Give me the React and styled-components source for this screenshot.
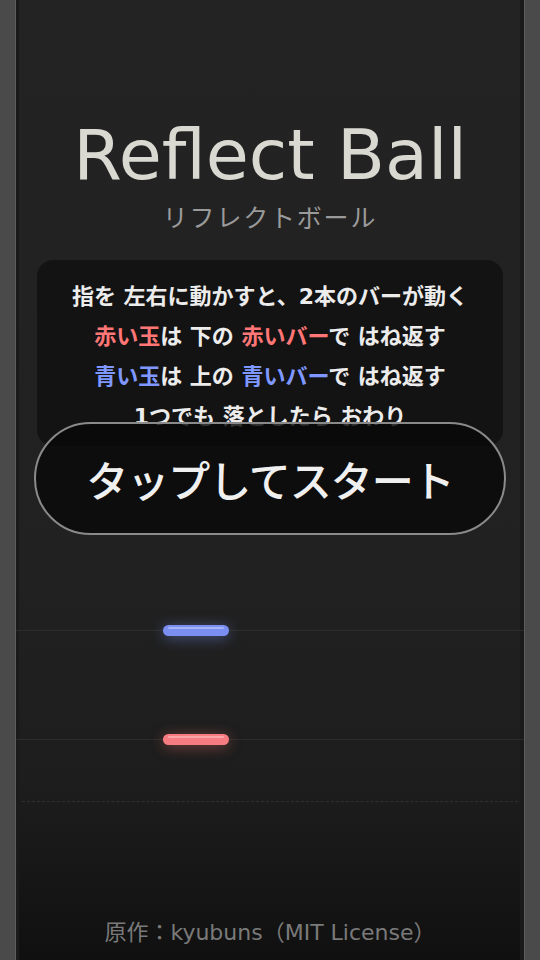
import React from 'react';
import styled, { createGlobalStyle } from 'styled-components';

const GlobalStyle = createGlobalStyle`
  html, body {
    margin: 0;
    padding: 0;
    background: #4a4a4a;
  }
  body {
    font-family: "DejaVu Sans", "Noto Sans CJK JP", sans-serif;
  }
`;

const Page = styled.div`
  width: 540px;
  height: 960px;
  display: flex;
  justify-content: center;
  overflow: hidden;
`;

const Frame = styled.div`
  width: 508px;
  height: 960px;
  display: grid;
  grid-template: 1fr / 1fr;
  background: linear-gradient(180deg, #232323 0%, #212121 60%, #1d1d1d 82%, #101010 100%);
  box-shadow: 0 0 0 1px #5c5c5c, inset 3px 0 0 #1a1a1a, inset -4px 0 0 #1a1a1a;
  overflow: hidden;
`;

/* play field: bars sit on their lanes */
const Field = styled.div`
  grid-area: 1 / 1;
  display: flex;
  flex-direction: column;
  padding-top: 625px;
`;

const Track = styled.div`
  display: flex;
  height: 11px;
  margin-top: ${p => p.$gap || 0}px;
  padding-left: 147px;
  background: linear-gradient(180deg, transparent 5px, #2c2c2c 5px, #2c2c2c 6px, transparent 6px);
`;

const Paddle = styled.div`
  position: relative;
  width: 66px;
  height: 11px;
  border-radius: 6px;
  background: ${p => p.$color};
  box-shadow: 0 2px 14px ${p => p.$glow};

  &::after {
    content: '';
    position: absolute;
    left: 5px;
    right: 5px;
    top: 2px;
    height: 2px;
    border-radius: 1px;
    background: rgba(255, 255, 255, 0.32);
  }
`;

const DeadLine = styled.div`
  margin: 56px 6px 0;
  border-top: 1px dashed #303030;
`;

const Overlay = styled.div`
  grid-area: 1 / 1;
  z-index: 1;
  display: flex;
  flex-direction: column;
  align-items: center;
  padding-top: 114px;
`;

const Title = styled.h1`
  margin: 0;
  font-family: "DejaVu Sans", sans-serif;
  font-weight: 400;
  font-size: 70px;
  line-height: 82px;
  color: #d9d9d1;
`;

const Subtitle = styled.div`
  margin-top: 5px;
  font-family: "Noto Sans CJK JP", sans-serif;
  font-size: 25px;
  letter-spacing: 1.8px;
  line-height: 30px;
  color: #9a9a9a;
`;

const InfoCard = styled.div`
  margin-top: 29px;
  width: 466px;
  height: 186px;
  box-sizing: border-box;
  padding-top: 17px;
  border-radius: 16px;
  background: rgba(0, 0, 0, 0.42);
  text-align: center;
  overflow: hidden;
`;

const InfoLine = styled.p`
  margin: 0;
  font-family: "DejaVu Sans", "Noto Sans CJK JP", sans-serif;
  font-weight: 700;
  font-size: 22px;
  line-height: 40px;
  color: #ececec;
  white-space: nowrap;
`;

const Accent = styled.span`
  color: ${p => (p.$tone === 'red' ? '#ff7676' : '#7f98ff')};
`;

const StartButton = styled.button`
  margin-top: -24px;
  width: 472px;
  height: 113px;
  border-radius: 57px;
  border: 2px solid #8a8a8a;
  background: rgba(8, 8, 8, 0.82);
  color: #f0f0f0;
  font-family: "Noto Sans CJK JP", sans-serif;
  font-size: 42px;
  font-weight: 500;
  letter-spacing: -1px;
  cursor: pointer;
`;

const Credit = styled.div`
  margin-top: auto;
  margin-bottom: 12px;
  font-family: "DejaVu Sans", "Noto Sans CJK JP", sans-serif;
  font-size: 22px;
  line-height: 30px;
  color: #7a7a7a;
`;

const App = () => (
  <>
    <GlobalStyle />
    <Page>
      <Frame>
        <Field>
          <Track>
            <Paddle $color="#7b8ff3" $glow="rgba(120, 150, 255, 0.45)" />
          </Track>
          <Track $gap={98}>
            <Paddle $color="#f77c82" $glow="rgba(255, 120, 110, 0.4)" />
          </Track>
          <DeadLine />
        </Field>
        <Overlay>
          <Title>Reflect Ball</Title>
          <Subtitle>リフレクトボール</Subtitle>
          <InfoCard>
            <InfoLine>指を 左右に動かすと、2本のバーが動く</InfoLine>
            <InfoLine>
              <Accent $tone="red">赤い玉</Accent>は 下の <Accent $tone="red">赤いバー</Accent>で はね返す
            </InfoLine>
            <InfoLine>
              <Accent $tone="blue">青い玉</Accent>は 上の <Accent $tone="blue">青いバー</Accent>で はね返す
            </InfoLine>
            <InfoLine>1つでも 落としたら おわり</InfoLine>
          </InfoCard>
          <StartButton>タップしてスタート</StartButton>
          <Credit>原作：kyubuns（MIT License）</Credit>
        </Overlay>
      </Frame>
    </Page>
  </>
);

export default App;
